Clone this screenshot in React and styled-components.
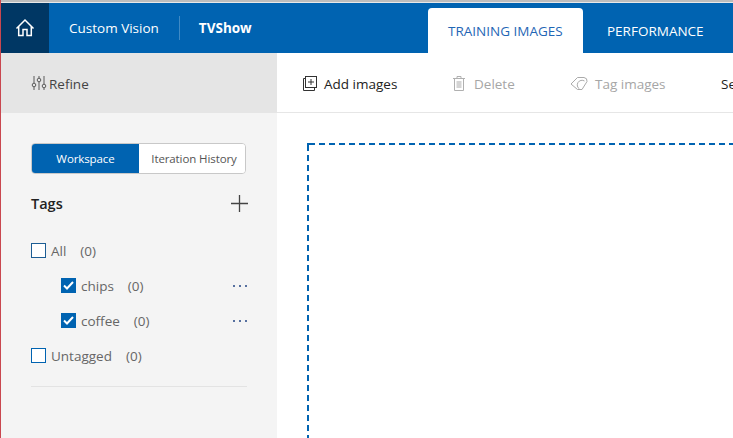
import React from "react";
import styled, { createGlobalStyle } from "styled-components";

const Global = createGlobalStyle`
  html, body {
    margin: 0;
    padding: 0;
    width: 733px;
    height: 438px;
    overflow: hidden;
    background: #fff;
    font-family: "Open Sans", "Noto Sans", sans-serif;
  }
`;

const Page = styled.div`
  width: 733px;
  height: 438px;
  overflow: hidden;
  box-sizing: border-box;
  border-left: 1px solid #c9474f;
  display: flex;
  flex-direction: column;
`;

const TopLine = styled.div`
  height: 3px;
  flex: none;
  background: linear-gradient(#bdbdbd 0, #bdbdbd 2px, #e8e8e8 2px);
`;

const Header = styled.header`
  height: 50px;
  flex: none;
  background: #0063b1;
  display: flex;
  align-items: stretch;
  color: #fff;
`;

const HomeButton = styled.div`
  width: 48px;
  background: #003764;
  display: flex;
  align-items: center;
  justify-content: center;
`;

const Brand = styled.div`
  display: flex;
  align-items: center;
  box-sizing: border-box;
  padding-left: 20px;
  width: 379px;
  font-size: 13.5px;
`;

const Divider = styled.span`
  width: 1px;
  height: 24px;
  margin: 0 19px 0 20px;
  background: #3f8ac5;
`;

const Project = styled.span`
  font-weight: 700;
`;

const Tab = styled.div`
  align-self: flex-end;
  height: 45px;
  display: flex;
  align-items: center;
  box-sizing: border-box;
  width: ${(p) => (p.$active ? "155px" : "auto")};
  padding: ${(p) => (p.$active ? "0 0 0 20px" : "0 0 0 24px")};
  font-size: 13.5px;
  border-radius: 4px 4px 0 0;
  background: ${(p) => (p.$active ? "#fff" : "transparent")};
  color: ${(p) => (p.$active ? "#1f66b5" : "#fff")};
`;

const Body = styled.div`
  flex: 1;
  display: flex;
  min-height: 0;
`;

const Sidebar = styled.aside`
  width: 276px;
  flex: none;
  background: #f4f4f4;
  display: flex;
  flex-direction: column;
`;

const RefineBar = styled.div`
  height: 60px;
  flex: none;
  background: #e5e5e5;
  display: flex;
  align-items: center;
  padding-left: 30px;
  gap: 2px;
  font-size: 13.5px;
  color: #444;
`;

const BarLabel = styled.span`
  padding-top: 2px;
`;

const SidePanel = styled.div`
  padding: 30px 29px 0 30px;
  display: flex;
  flex-direction: column;
`;

const Switcher = styled.div`
  display: flex;
  width: 215px;
  height: 31px;
  box-sizing: border-box;
  border: 1px solid #c8c8c8;
  border-radius: 4px;
  overflow: hidden;
  background: #fff;
`;

const SwitchOption = styled.div`
  display: flex;
  align-items: center;
  justify-content: center;
  box-sizing: border-box;
  font-size: 11.5px;
  letter-spacing: -0.1px;
  width: ${(p) => (p.$active ? "107px" : "106px")};
  padding-left: ${(p) => (p.$active ? "0" : "4px")};
  background: ${(p) => (p.$active ? "#0063b1" : "#fff")};
  color: ${(p) => (p.$active ? "#fff" : "#555")};
`;

const TagsHead = styled.div`
  display: flex;
  justify-content: space-between;
  align-items: center;
  height: 30px;
  margin-top: 14px;
  font-size: 14.5px;
  font-weight: 600;
  color: #222;
`;

const TagList = styled.div`
  margin-top: 15px;
  display: flex;
  flex-direction: column;
`;

const TagRow = styled.div`
  height: 35px;
  display: flex;
  align-items: center;
  padding-left: ${(p) => (p.$nested ? "30px" : "0")};
  font-size: 13.5px;
  color: #666;
`;

const Box = styled.span`
  width: 15px;
  height: 15px;
  box-sizing: border-box;
  flex: none;
  margin-right: 5px;
  display: flex;
  align-items: center;
  justify-content: center;
  background: ${(p) => (p.$checked ? "#0063b1" : "#fff")};
  border: 1px solid ${(p) => (p.$checked ? "#0063b1" : p.$muted ? "#1c5d94" : "#0063b1")};
`;

const Count = styled.span`
  margin-left: 14px;
`;

const More = styled.span`
  margin-left: auto;
  display: flex;
  gap: 4px;
  margin-right: 1px;
  span {
    width: 2px;
    height: 2px;
    background: #56709f;
  }
`;

const Rule = styled.div`
  height: 1px;
  background: #e3e3e3;
  margin-top: 13px;
  width: 216px;
`;

const Main = styled.main`
  flex: 1;
  min-width: 0;
  display: flex;
  flex-direction: column;
`;

const Toolbar = styled.div`
  height: 60px;
  flex: none;
  box-sizing: border-box;
  border-bottom: 1px solid #e6e6e6;
  display: flex;
  align-items: center;
  padding-left: 25px;
  white-space: nowrap;
  overflow: hidden;
`;

const ToolButton = styled.div`
  display: flex;
  align-items: center;
  gap: ${(p) => p.$gap || 6}px;
  width: ${(p) => p.$w}px;
  flex: none;
  font-size: 13.5px;
  color: ${(p) => (p.$disabled ? "#a6a6a6" : "#222")};
`;

const DropArea = styled.div`
  flex: 1;
  padding: 30px 0 0 30px;
  overflow: hidden;
`;

const DropZone = styled.div`
  width: 500px;
  height: 400px;
  background:
    linear-gradient(#0063b1, #0063b1) top left / 2px 2px no-repeat,
    repeating-linear-gradient(90deg, transparent 0 2px, #0063b1 2px 8px, transparent 8px 10px) top left / 100% 2px no-repeat,
    repeating-linear-gradient(180deg, transparent 0 2px, #0063b1 2px 8px, transparent 8px 10px) top left / 2px 100% no-repeat;
`;

const HomeIcon = () => (
  <svg width="20" height="20" viewBox="0 0 20 20" fill="none" stroke="#fff" strokeWidth="1.500">
    <path d="M1.500 10.500 L10 2 L18.500 10.500" />
    <path d="M3.700 8.500 V17.500 H8 V11.500 H12 V17.500 H16.300 V8.500" />
  </svg>
);

const RefineIcon = () => (
  <svg width="16" height="16" viewBox="0 0 16 16" fill="none" stroke="#5a5a5a" strokeWidth="1">
    <path d="M3 1v7M3 12v3M8 1v2M8 7v8M13 1v8M13 13v2" />
    <circle cx="3" cy="10" r="1.800" />
    <circle cx="8" cy="5" r="1.800" />
    <circle cx="13" cy="11" r="1.800" />
  </svg>
);

const AddIcon = () => (
  <svg width="16" height="16" viewBox="0 0 16 16" fill="none" stroke="#333" strokeWidth="1">
    <path d="M3.500 3.500H1.500V15.500H12.500V13" />
    <rect x="3.500" y="1.500" width="11" height="11" />
    <path d="M9 4v6M6 7h6" />
  </svg>
);

const TrashIcon = () => (
  <svg width="14" height="16" viewBox="0 0 14 16" fill="none" stroke="#b0b0b0" strokeWidth="1">
    <path d="M2.500 3.500V15.500H11.500V3.500M1 3.500H13M5 3.500V1.500H9V3.500" />
    <rect x="4.500" y="6" width="5" height="7" fill="#d4d4d4" stroke="none" />
  </svg>
);

const TagIcon = () => (
  <svg width="18" height="16" viewBox="0 0 18 16" fill="none" stroke="#aaaaaa" strokeWidth="1">
    <path d="M1 9 L7.500 2.500 H14 Q17.500 3 17 6.500 L12 14.500 H7.500 Z" />
    <path d="M14.500 6 A4.500 4.500 0 0 0 9.500 14" />
  </svg>
);

const Check = () => (
  <svg width="11" height="9" viewBox="0 0 11 9" fill="none" stroke="#fff" strokeWidth="2">
    <path d="M1 4.500 L4 7.500 L10 1" />
  </svg>
);

const Plus = () => (
  <svg width="17" height="17" viewBox="0 0 17 17" stroke="#444" strokeWidth="1.300">
    <path d="M8.500 0V17M0 8.500H17" />
  </svg>
);

const Dots = () => (
  <More>
    <span />
    <span />
    <span />
  </More>
);

const tags = [
  { name: "All" },
  { name: "chips", nested: true, checked: true, more: true },
  { name: "coffee", nested: true, checked: true, more: true },
  { name: "Untagged" },
];

export default function App() {
  return (
    <>
      <Global />
      <Page>
        <TopLine />
        <Header>
          <HomeButton>
            <HomeIcon />
          </HomeButton>
          <Brand>
            Custom Vision
            <Divider />
            <Project>TVShow</Project>
          </Brand>
          <Tab $active>TRAINING IMAGES</Tab>
          <Tab>PERFORMANCE</Tab>
        </Header>
        <Body>
          <Sidebar>
            <RefineBar>
              <RefineIcon />
              <BarLabel>Refine</BarLabel>
            </RefineBar>
            <SidePanel>
              <Switcher>
                <SwitchOption $active>Workspace</SwitchOption>
                <SwitchOption>Iteration History</SwitchOption>
              </Switcher>
              <TagsHead>
                Tags
                <Plus />
              </TagsHead>
              <TagList>
                {tags.map((t) => (
                  <TagRow key={t.name} $nested={t.nested}>
                    <Box $checked={t.checked} $muted={t.name === "All"}>
                      {t.checked && <Check />}
                    </Box>
                    {t.name}
                    <Count>(0)</Count>
                    {t.more && <Dots />}
                  </TagRow>
                ))}
              </TagList>
              <Rule />
            </SidePanel>
          </Sidebar>
          <Main>
            <Toolbar>
              <ToolButton $w={150}>
                <AddIcon />
                <BarLabel>Add images</BarLabel>
              </ToolButton>
              <ToolButton $w={118} $disabled $gap={8}>
                <TrashIcon />
                <BarLabel>Delete</BarLabel>
              </ToolButton>
              <ToolButton $w={151} $disabled $gap={7}>
                <TagIcon />
                <BarLabel>Tag images</BarLabel>
              </ToolButton>
              <ToolButton $w={80}>
                <BarLabel>Select all</BarLabel>
              </ToolButton>
            </Toolbar>
            <DropArea>
              <DropZone />
            </DropArea>
          </Main>
        </Body>
      </Page>
    </>
  );
}
